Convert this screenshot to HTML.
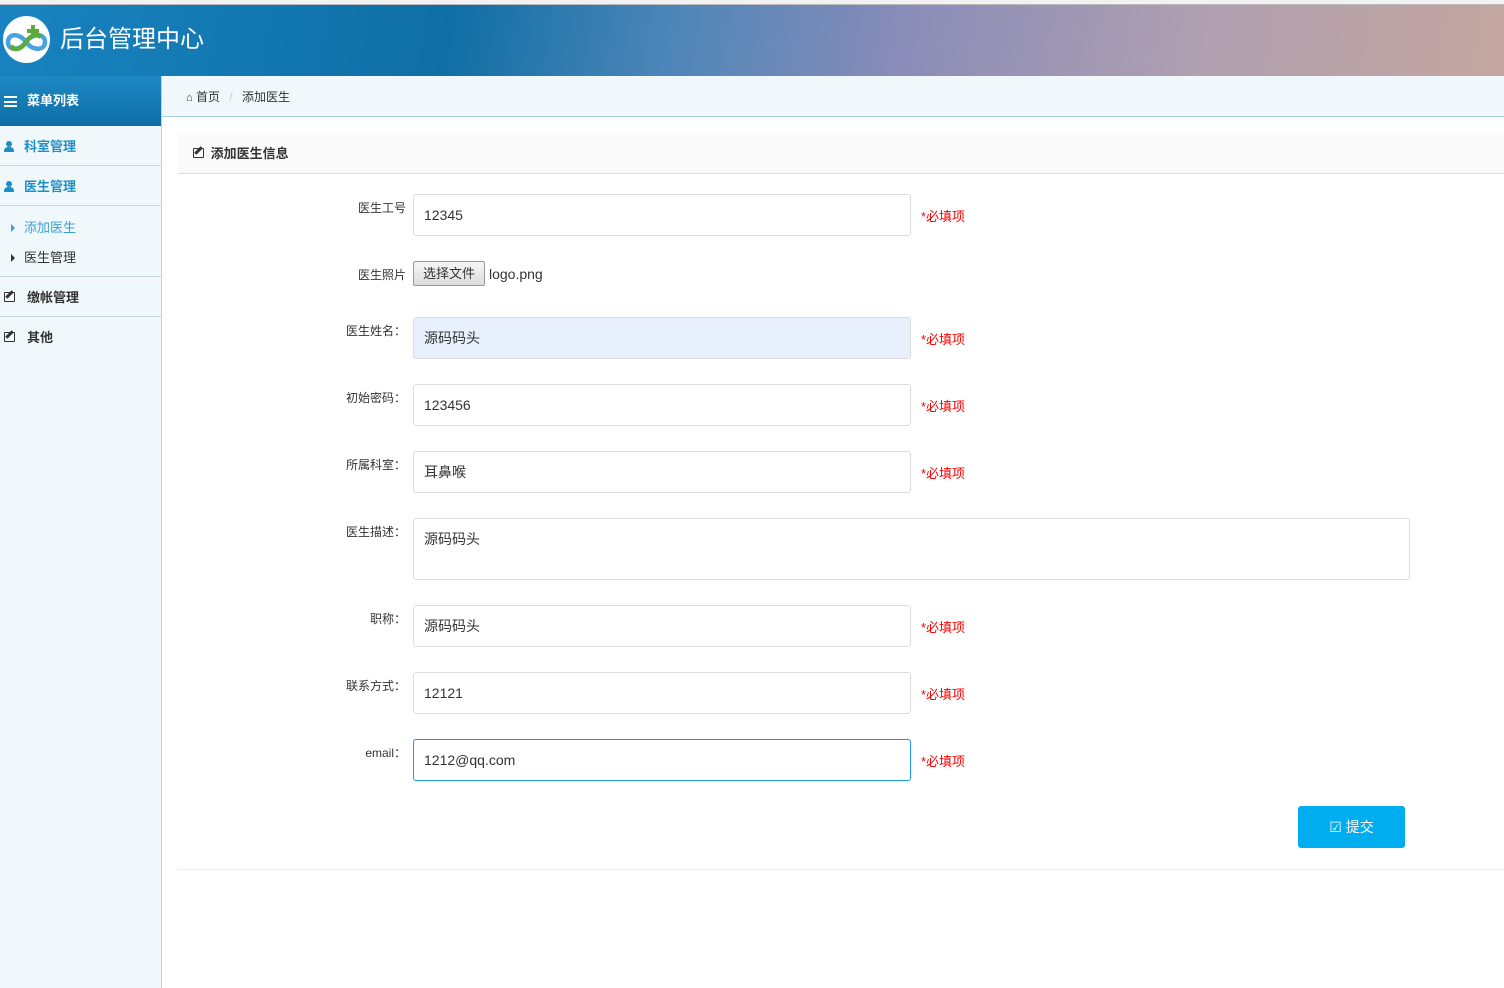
<!DOCTYPE html>
<html><head><meta charset="utf-8"><style>
*{margin:0;padding:0;box-sizing:border-box}
body{width:1504px;height:988px;overflow:hidden;background:#fff;font-family:"Liberation Sans","Noto Sans CJK SC",sans-serif;font-size:13px;color:#333;position:relative}
.top{position:absolute;left:0;top:0;width:1504px;height:5px;background:#f2f2f2;border-bottom:1px solid #bbb}
.hdr{position:absolute;left:0;top:5px;width:1504px;height:71px;background:linear-gradient(100deg,#1883c0 0%,#0f6fa5 30%,#4f86b8 45%,#8a8cb8 60%,#b0a0b0 80%,#c4a69f 100%)}
.logo{position:absolute;left:3px;top:11px;width:47px;height:47px;border-radius:50%;background:#fff}
.title{position:absolute;left:60px;top:19px;color:#fff;font-size:24px;line-height:32px}
.side{position:absolute;left:0;top:76px;width:162px;height:912px;background:#f0f8fc;border-right:1px solid #b8d4e0}
.mh{height:50px;background:linear-gradient(#1d88c3,#0e6ea6);color:#fff;font-weight:bold;font-size:13px;line-height:50px;padding-left:27px;position:relative}
.it{height:40px;line-height:42px;border-bottom:1px solid #c4d9e3;font-weight:bold;padding-left:24px;position:relative;font-size:13px}
.blue{color:#1e90c8}
.sub{height:71px;border-bottom:1px solid #c4d9e3;padding-top:8px}
.sub div{height:30px;line-height:28px;padding-left:24px;position:relative}
.sub div:before{content:"";position:absolute;left:11px;top:10px;border-left:4px solid #333;border-top:4px solid transparent;border-bottom:4px solid transparent}
.sub .a{color:#3aa0d0}.sub .a:before{border-left-color:#3aa0d0}
.bc{position:absolute;left:162px;top:76px;width:1342px;height:41px;background:#f0f8fc;border-bottom:1px solid #a9cfe0;line-height:42px;padding-left:24px;font-size:12px}
.panel{position:absolute;left:178px;top:133px;width:1326px;height:737px;border-bottom:1px solid #eee}
.ph{height:41px;background:#fafafa;border-bottom:1px solid #ddd;line-height:42px;padding-left:15px;font-weight:bold;font-size:13px}
.lbl{position:absolute;font-size:12px;text-align:right;width:120px}
.inp{position:absolute;left:413px;width:498px;height:42px;border:1px solid #ddd;border-radius:3px;padding-left:10px;line-height:40px;font-size:14px}
.req{position:absolute;left:921px;color:#f00;font-size:13px}
.btn{position:absolute;left:1298px;top:806px;width:107px;height:42px;background:#00aeef;border-radius:3px;color:#fff;line-height:42px;text-align:center;font-size:14px}
.ed{position:absolute;left:4px;top:15px;width:11px;height:10px;border:1.5px solid #333;border-radius:1px}
.ed:after{content:"";position:absolute;left:3px;top:-3px;width:3px;height:9px;background:#333;transform:rotate(45deg)}
</style></head><body>
<div class="top"></div>
<div class="hdr">
<div class="logo"><svg width="47" height="47" viewBox="0 0 47 47"><path d="M23 26 C17 17 5 17 5 26 C5 35 17 35 23 26" fill="none" stroke="#4aa2e0" stroke-width="4.5"/><path d="M23 26 C29 17 42 17 42 26 C42 35 29 35 23 26" fill="none" stroke="#4aa2e0" stroke-width="4.5"/><path d="M8 30 C13 36 19 32 23 26 C27 20 33 17 38 21" fill="none" stroke="#5aab3c" stroke-width="4.5"/><path d="M28 9h4v4h4v4h-4v4h-4v-4h-4v-4h4z" fill="#5aab3c"/></svg></div>
<div class="title">后台管理中心</div>
</div>
<div class="side">
<div class="mh"><span style="position:absolute;left:4px;top:20px;width:13px;height:11px;border-top:2px solid #fff;border-bottom:2px solid #fff"><span style="position:absolute;left:0;top:2.5px;width:13px;height:2px;background:#fff"></span></span>菜单列表</div>
<div class="it blue"><span style="position:absolute;left:4px;top:15px;width:10px;height:11px;"><span style="position:absolute;left:2px;top:0;width:6px;height:6px;border-radius:50%;background:#1e90c8"></span><span style="position:absolute;left:0;top:6px;width:10px;height:5px;border-radius:4px 4px 0 0;background:#1e90c8"></span></span>科室管理</div>
<div class="it blue"><span style="position:absolute;left:4px;top:15px;width:10px;height:11px;"><span style="position:absolute;left:2px;top:0;width:6px;height:6px;border-radius:50%;background:#1e90c8"></span><span style="position:absolute;left:0;top:6px;width:10px;height:5px;border-radius:4px 4px 0 0;background:#1e90c8"></span></span>医生管理</div>
<div class="sub"><div class="a">添加医生</div><div>医生管理</div></div>
<div class="it" style="padding-left:27px"><span class="ed"></span>缴帐管理</div>
<div class="it" style="padding-left:27px;border-bottom:none"><span class="ed"></span>其他</div>
</div>
<div class="bc"><span style="font-size:11px">&#8962;</span> 首页 <span style="color:#ccc;margin:0 6px">/</span> 添加医生</div>
<div class="panel"><div class="ph"><span style="position:relative;display:inline-block;width:14px;height:12px;vertical-align:-1px"><span class="ed" style="left:0;top:1px"></span></span> 添加医生信息</div></div>
<div class="lbl" style="left:286px;top:199px">医生工号</div>
<div class="inp" style="top:194px">12345</div><div class="req" style="top:206px">*必填项</div>
<div class="lbl" style="left:286px;top:266px">医生照片</div>
<div style="position:absolute;left:413px;top:261px;width:72px;height:25px;border:1px solid #999;border-radius:2px;background:linear-gradient(#f6f6f6,#ddd);font-size:13px;line-height:23px;text-align:center">选择文件</div>
<div style="position:absolute;left:489px;top:266px;font-size:14px">logo.png</div>
<div class="lbl" style="left:286px;top:322px">医生姓名：</div>
<div class="inp" style="top:317px;background:#e8f0fe">源码码头</div><div class="req" style="top:329px">*必填项</div>
<div class="lbl" style="left:286px;top:389px">初始密码：</div>
<div class="inp" style="top:384px">123456</div><div class="req" style="top:396px">*必填项</div>
<div class="lbl" style="left:286px;top:456px">所属科室：</div>
<div class="inp" style="top:451px">耳鼻喉</div><div class="req" style="top:463px">*必填项</div>
<div class="lbl" style="left:286px;top:523px">医生描述：</div>
<div class="inp" style="top:518px;width:997px;height:62px">源码码头</div>
<div class="lbl" style="left:286px;top:610px">职称：</div>
<div class="inp" style="top:605px">源码码头</div><div class="req" style="top:617px">*必填项</div>
<div class="lbl" style="left:286px;top:677px">联系方式：</div>
<div class="inp" style="top:672px">12121</div><div class="req" style="top:684px">*必填项</div>
<div class="lbl" style="left:286px;top:744px">email：</div>
<div class="inp" style="top:739px;border-color:#1e9be0">1212@qq.com</div><div class="req" style="top:751px">*必填项</div>
<div class="btn">☑ 提交</div>
</body></html>
